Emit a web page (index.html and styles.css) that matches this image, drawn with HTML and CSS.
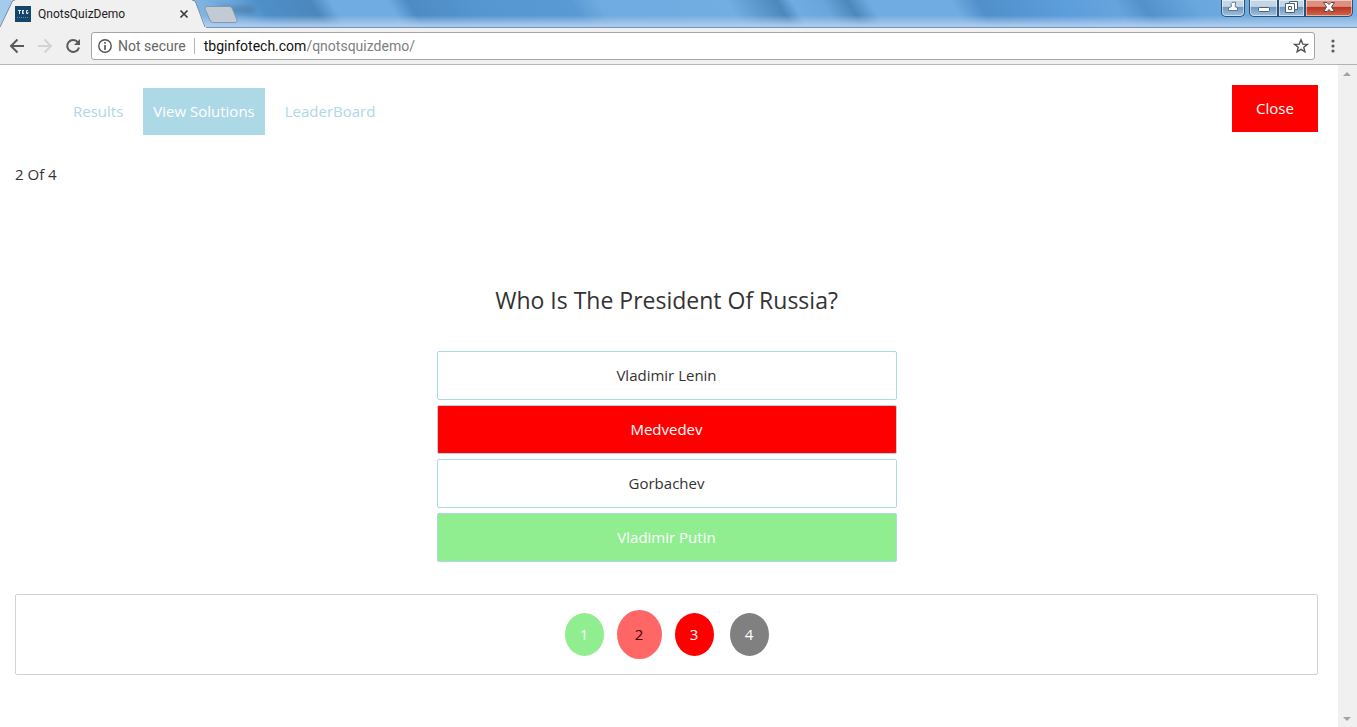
FILE: index.html
```
<!DOCTYPE html>
<html lang="en">
<head>
<meta charset="utf-8">
<title>QnotsQuizDemo</title>
<link rel="stylesheet" href="styles.css">
</head>
<body>
<header class="browser">
  <div class="titlebar">
    <svg class="glass" viewBox="0 0 1357 28" preserveAspectRatio="none" aria-hidden="true">
      <defs>
        <linearGradient id="bands" gradientUnits="userSpaceOnUse" x1="0" y1="0" x2="1357" y2="0" gradientTransform="skewX(32)">
          <stop offset="0" stop-color="#a5cbec"/>
          <stop offset="0.14" stop-color="#84b5e2"/>
          <stop offset="0.17" stop-color="#6ba7dc"/>
          <stop offset="0.19" stop-color="#4f8fc8"/>
          <stop offset="0.228" stop-color="#4b87bc"/>
          <stop offset="0.243" stop-color="#70ace1"/>
          <stop offset="0.285" stop-color="#70ace1"/>
          <stop offset="0.3" stop-color="#4d8bc4"/>
          <stop offset="0.35" stop-color="#5596d1"/>
          <stop offset="0.42" stop-color="#5a9ad4"/>
          <stop offset="0.44" stop-color="#6fabe0"/>
          <stop offset="0.535" stop-color="#72aee2"/>
          <stop offset="0.572" stop-color="#4d88bc"/>
          <stop offset="0.583" stop-color="#70ace1"/>
          <stop offset="0.605" stop-color="#6aa6db"/>
          <stop offset="0.624" stop-color="#4d88bc"/>
          <stop offset="0.64" stop-color="#70ace1"/>
          <stop offset="0.7" stop-color="#70ace1"/>
          <stop offset="0.72" stop-color="#508fca"/>
          <stop offset="0.78" stop-color="#5c9ddb"/>
          <stop offset="0.82" stop-color="#66a4dc"/>
          <stop offset="0.84" stop-color="#5291cb"/>
          <stop offset="0.88" stop-color="#69a7de"/>
          <stop offset="1" stop-color="#7db2e2"/>
        </linearGradient>
        <linearGradient id="fade" x1="0" y1="0" x2="0" y2="1">
          <stop offset="0.55" stop-color="#b0cdee" stop-opacity="0"/>
          <stop offset="0.9" stop-color="#b0cdee" stop-opacity="0.9"/>
        </linearGradient>
        <filter id="soft" x="-30%" y="-150%" width="160%" height="400%"><feGaussianBlur stdDeviation="3"/></filter>
      </defs>
      <rect width="1357" height="28" fill="url(#bands)"/>
      <rect width="1357" height="28" fill="url(#fade)"/>
      <rect x="218" y="7" width="36" height="6" fill="#3d6288" opacity="0.6" filter="url(#soft)"/>
      <rect y="27" width="1357" height="1" fill="#7596bb"/>
    </svg>
    <svg class="tab-shape" viewBox="0 0 240 28" aria-hidden="true">
      <path d="M0 28V26L12 2Q13 0 15 0H192Q195 0 196 3L206 27V28Z" fill="#f0f0f0"/>
      <path d="M0 27L12 2Q13 0 15 0M192 0Q195 0 196 3L205 27" fill="none" stroke="#7189a4"/>
      <path d="M207 6.500H229Q231 6.500 232 8L237 20Q238 22.500 235 22.500H213Q211 22.500 210 20L205 9Q204 6.500 207 6.500Z" fill="#c2cbd4" stroke="#8399b0"/>
    </svg>
    <div class="tab">
      <svg width="16" height="16" viewBox="0 0 16 16" aria-hidden="true">
        <rect width="16" height="16" fill="#134668"/>
        <path d="M3 4.500H6M4.500 4.500V8M7.500 4V8M7.500 4.500H9M7.500 6H9M7.500 7.500H9M13 4.500H11.500V7.500H13V6" fill="none" stroke="#dce6ec"/>
        <path d="M2 11.500H14" stroke="#668aa0" stroke-dasharray="1 1"/>
      </svg>
      <span class="tab-title">QnotsQuizDemo</span>
      <button class="plain" aria-label="Close tab">
        <svg width="10" height="10" viewBox="0 0 10 10"><path d="M1.500 1.500L8.500 8.500M8.500 1.500L1.500 8.500" stroke="#3c3c3c" stroke-width="1.700"/></svg>
      </button>
    </div>
    <div class="window-controls">
      <button class="win user" aria-label="Profile">
        <svg width="12" height="12" viewBox="0 0 12 12"><path d="M4 2.500L5 1.500L8.500 1V3L8 5.500L10.500 7V9.500H1.500V7L4.500 5.500Z" fill="#fff" stroke="#49627a" stroke-width=".8"/></svg>
      </button>
      <div class="win-group">
        <button class="win" aria-label="Minimize">
          <svg width="14" height="12" viewBox="0 0 14 12"><rect x="1.500" y="6.500" width="11" height="4" rx="1" fill="#fff" stroke="#50606f"/></svg>
        </button>
        <button class="win" aria-label="Restore">
          <svg width="14" height="12" viewBox="0 0 14 12"><path d="M4.500 .5H12.500V8.500H9.500V11.500H.5V2.500H4.500Z" fill="#fff" stroke="#50606f"/><path d="M4.500 2.500H9.500V8.500M3.500 5.500H6.500V8.500H3.500Z" fill="none" stroke="#50606f"/></svg>
        </button>
        <button class="win close-window" aria-label="Close window">
          <svg width="14" height="12" viewBox="0 0 14 12"><path d="M1.500 1.500H5L7 3.500L9 1.500H12.500L9.500 6L12.500 10.500H9L7 8.500L5 10.500H1.500L4.500 6Z" fill="#fff" stroke="#5c4a50"/></svg>
        </button>
      </div>
    </div>
  </div>
  <div class="toolbar">
    <button class="plain" aria-label="Back">
      <svg width="16" height="16" viewBox="0 0 16 16"><path d="M15 8H2M8.500 1.500L2 8L8.500 14.500" fill="none" stroke="#5a5a5a" stroke-width="2"/></svg>
    </button>
    <button class="plain" aria-label="Forward">
      <svg width="16" height="16" viewBox="0 0 16 16"><path d="M1 8H14M7.500 1.500L14 8L7.500 14.500" fill="none" stroke="#d3d3d3" stroke-width="2"/></svg>
    </button>
    <button class="plain" aria-label="Reload">
      <svg width="16" height="16" viewBox="0 0 16 16"><path d="M13 4.300A6 6 0 1 0 14 9.500" fill="none" stroke="#5a5a5a" stroke-width="2"/><path d="M15 1V7H9Z" fill="#5a5a5a"/></svg>
    </button>
    <div class="address">
      <svg width="14" height="14" viewBox="0 0 14 14" aria-hidden="true"><circle cx="7" cy="7" r="6.200" fill="none" stroke="#505050" stroke-width="1.400"/><path d="M7 3V4.700M7 6V11" stroke="#505050" stroke-width="1.600"/></svg>
      <span class="security">Not secure</span>
      <a class="url" href="#"><span class="host">tbginfotech.com</span>/qnotsquizdemo/</a>
      <button class="plain" aria-label="Bookmark">
        <svg width="16" height="16" viewBox="0 0 16 16"><path d="M8 1.800L9.800 6.100L14.300 6.400L10.800 9.300L11.900 13.800L8 11.400L4.100 13.800L5.200 9.300L1.700 6.400L6.200 6.100Z" fill="none" stroke="#505050" stroke-width="1.400"/></svg>
      </button>
    </div>
    <button class="plain menu" aria-label="Menu">
      <svg width="4" height="14" viewBox="0 0 4 14"><g fill="#5a5a5a"><circle cx="2" cy="2" r="1.600"/><circle cx="2" cy="7" r="1.600"/><circle cx="2" cy="12" r="1.600"/></g></svg>
    </button>
  </div>
</header>
<div class="viewport">
  <main class="page">
    <div class="top">
      <nav class="tabs">
        <a href="#">Results</a>
        <a class="active" href="#">View Solutions</a>
        <a href="#">LeaderBoard</a>
      </nav>
      <button class="close">Close</button>
    </div>
    <p class="progress">2 Of 4</p>
    <section class="quiz">
      <h1>Who Is The President Of Russia?</h1>
      <button class="answer">Vladimir Lenin</button>
      <button class="answer wrong">Medvedev</button>
      <button class="answer">Gorbachev</button>
      <button class="answer right">Vladimir Putin</button>
    </section>
    <nav class="pager">
      <button class="dot green">1</button>
      <button class="dot current">2</button>
      <button class="dot red">3</button>
      <button class="dot gray">4</button>
    </nav>
  </main>
  <div class="scrollbar" aria-hidden="true">
    <svg width="8" height="4" viewBox="0 0 8 4"><path d="M0 4L4 0L8 4Z" fill="#a3a3a3"/></svg>
    <svg width="8" height="4" viewBox="0 0 8 4"><path d="M0 0L4 4L8 0Z" fill="#a3a3a3"/></svg>
  </div>
</div>
</body>
</html>
```

FILE: styles.css
```
* { box-sizing: border-box; }
body {
  margin: 0;
  min-height: 100vh;
  display: flex;
  flex-direction: column;
  background: #fff;
  color: #333;
  font-family: "Open Sans", "Noto Sans", sans-serif;
  font-size: 15px;
  line-height: 21px;
}
button { font: inherit; color: inherit; cursor: pointer; }
a { text-decoration: none; }
svg { display: block; flex: none; }

/* Browser frame */
.titlebar {
  position: relative;
  height: 28px;
  display: flex;
  justify-content: space-between;
  align-items: flex-start;
}
.glass { position: absolute; inset: 0; width: 100%; height: 28px; }
.tab-shape { position: absolute; left: 0; top: 0; width: 240px; height: 28px; }
.tab {
  position: relative;
  width: 189px;
  height: 28px;
  padding-left: 15px;
  display: flex;
  align-items: center;
  gap: 7px;
  font-family: Roboto, sans-serif;
  font-size: 12px;
  color: #222;
}
.tab-title { flex: 1; }
.plain { display: block; padding: 0; border: 0; background: none; }
.window-controls { position: relative; display: flex; gap: 4px; padding-right: 4px; }
.win-group { display: flex; }
.win {
  height: 17px;
  width: 27px;
  padding: 0 0 2px;
  display: flex;
  justify-content: center;
  align-items: center;
  border: 1px solid #2f506f;
  border-top: 0;
  background: linear-gradient(#c3d6e8 40%, #6f97bd 45%, #9fc2e2);
  box-shadow: inset 0 0 0 1px rgba(255, 255, 255, .5);
}
.win.user { width: 24px; border-radius: 0 0 5px 5px; }
.win-group .win:first-child { width: 29px; border-radius: 0 0 0 5px; }
.win-group .close-window {
  width: 48px;
  border-radius: 0 0 5px 0;
  background: linear-gradient(#dd9080 40%, #bb3420 45%, #d0674f);
}
.toolbar {
  display: flex;
  align-items: center;
  gap: 12px;
  height: 37px;
  padding: 0 22px 0 9px;
  background: #f0f0f0;
  border-bottom: 1px solid #b4b4b4;
}
.address {
  flex: 1;
  display: flex;
  align-items: center;
  height: 28px;
  margin-left: -2px;
  padding: 0 5px 0 6px;
  border: 1px solid #a5a5a5;
  border-radius: 3px;
  background: #fff;
  font-size: 14px;
  font-family: Roboto, sans-serif;
}
.security {
  margin-left: 6px;
  padding-right: 8px;
  border-right: 1px solid #b5b5b5;
  line-height: 16px;
  color: #666;
}
.url { flex: 1; margin-left: 9px; color: #808080; }
.host { color: #111; }
.menu { margin-left: 4px; }

/* Quiz page */
.viewport { flex: 1; display: flex; }
.page { flex: 1; padding: 20px 20px 52px 15px; }
.top { display: flex; justify-content: space-between; align-items: flex-start; }
.tabs { display: flex; gap: 10px; padding: 3px 0 0 48px; }
.tabs a { padding: 13px 10px; color: #add8e6; }
.tabs .active { background: #add8e6; color: #fff; }
.close { width: 86px; height: 47px; border: 0; background: #f00; color: #fff; }
.progress { margin: 29px 0 0; }
.quiz {
  width: 460px;
  max-width: 100%;
  margin: 97px auto 32px;
  display: flex;
  flex-direction: column;
  gap: 5px;
}
h1 {
  margin: 0 0 28px;
  font-size: 23px;
  line-height: 36px;
  font-weight: 400;
  text-align: center;
}
.answer {
  height: 49px;
  border: 1px solid #add8e6;
  border-radius: 2px;
  background: #fff;
}
.wrong { background: #f00; color: #fff; }
.right { background: #90ee90; color: #fff; }
.pager {
  display: flex;
  justify-content: center;
  align-items: center;
  gap: 16px;
  height: 81px;
  border: 1px solid #d3d3d3;
  border-radius: 2px;
}
.dot {
  width: 39px;
  height: 43px;
  padding: 0;
  border: 0;
  border-radius: 50%;
  color: #fff;
}
.green { background: #90ee90; }
.red { background: #f00; }
.gray { background: #808080; }
.current {
  width: 45px;
  height: 49px;
  margin: 0 -3px;
  background: #f66;
  color: #400;
}
.scrollbar {
  width: 19px;
  padding: 7px 1px 6px 0;
  display: flex;
  flex-direction: column;
  justify-content: space-between;
  align-items: center;
  background: #f0f0f0;
}
```
